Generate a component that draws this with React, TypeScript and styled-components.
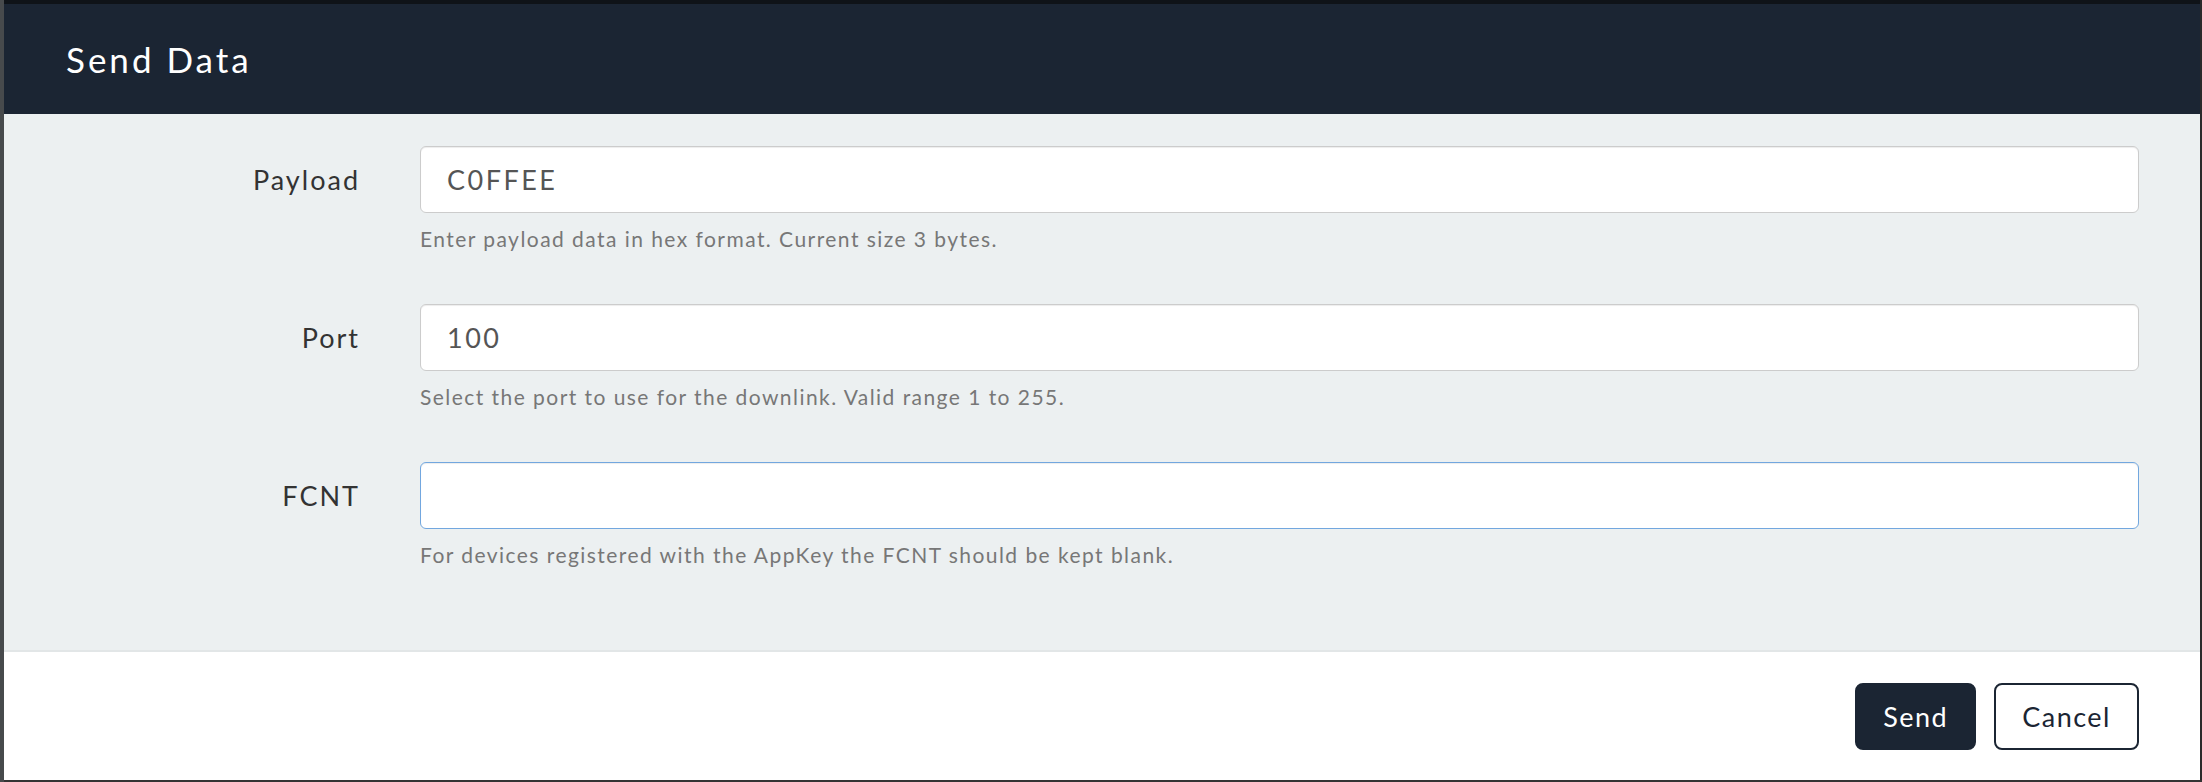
import styled, { createGlobalStyle } from "styled-components";

const GlobalStyle = createGlobalStyle`
    html, body {
        margin: 0;
        padding: 0;
        background: #2f3133;
    }
    * {
        box-sizing: border-box;
    }
`;

const Backdrop = styled.div`
    height: 782px;
    padding: 4px 2px 2px 4px;
    background: #0f1318;
    box-shadow: inset 4px 0 0 #474a4c, inset 0 -2px 0 #343434, inset -2px 0 0 #2a2a2a;
    font-family: "Lato", "Liberation Sans", sans-serif;
`;

const Modal = styled.div`
    height: 100%;
    display: flex;
    flex-direction: column;
    background: #ecf0f1;
`;

const Header = styled.div`
    height: 110px;
    flex-shrink: 0;
    display: flex;
    align-items: center;
    padding-left: 62px;
    background: #1b2533;
`;

const Title = styled.h4`
    margin: 0;
    font-size: 35px;
    font-weight: 400;
    letter-spacing: 3px;
    color: #ffffff;
`;

const Body = styled.div`
    flex: 1;
    display: flex;
    flex-direction: column;
    gap: 52px;
    padding: 32px 61px 0 0;
    border-bottom: 2px solid #e2e6e7;
`;

const FormRow = styled.div`
    display: grid;
    grid-template-columns: 356px 1fr;
    column-gap: 60px;
`;

const Label = styled.label`
    height: 67px;
    display: flex;
    align-items: center;
    justify-content: flex-end;
    font-size: 27px;
    letter-spacing: 2px;
    color: #333333;
`;

const Field = styled.div`
    display: flex;
    flex-direction: column;
    gap: 13px;
`;

const Input = styled.input<{ $focused?: boolean }>`
    height: 67px;
    width: 100%;
    padding: 0 26px;
    border: 1px solid ${(props) => props.$focused ? "#72a7df" : "#cccccc"};
    border-radius: 6px;
    box-shadow: inset 0 1px 1px rgba(0, 0, 0, 0.075);
    background: #ffffff;
    font-family: inherit;
    font-size: 27px;
    letter-spacing: 2.5px;
    color: #555555;
    outline: none;
`;

const Help = styled.span`
    line-height: 26px;
    font-size: 21px;
    letter-spacing: 1.45px;
    color: #777777;
`;

const Footer = styled.div`
    height: 128px;
    flex-shrink: 0;
    display: flex;
    justify-content: flex-end;
    align-items: center;
    gap: 18px;
    padding-right: 61px;
    background: #ffffff;
`;

const Button = styled.button<{ $primary?: boolean }>`
    height: 67px;
    padding: 0 26px;
    border: 2px solid #1b2533;
    border-radius: 8px;
    background: ${(props) => props.$primary ? "#1b2533" : "#ffffff"};
    color: ${(props) => props.$primary ? "#ffffff" : "#1b2533"};
    font-family: inherit;
    font-size: 27px;
    letter-spacing: 1.5px;
    cursor: pointer;
`;

export default function App() {
    return (
        <>
            <GlobalStyle />
            <Backdrop>
                <Modal>
                    <Header>
                        <Title>Send Data</Title>
                    </Header>
                    <Body>
                        <FormRow>
                            <Label>Payload</Label>
                            <Field>
                                <Input defaultValue="C0FFEE" />
                                <Help>Enter payload data in hex format. Current size 3 bytes.</Help>
                            </Field>
                        </FormRow>
                        <FormRow>
                            <Label>Port</Label>
                            <Field>
                                <Input defaultValue="100" />
                                <Help>Select the port to use for the downlink. Valid range 1 to 255.</Help>
                            </Field>
                        </FormRow>
                        <FormRow>
                            <Label>FCNT</Label>
                            <Field>
                                {/* focused field in the screenshot */}
                                <Input $focused defaultValue="" />
                                <Help>For devices registered with the AppKey the FCNT should be kept blank.</Help>
                            </Field>
                        </FormRow>
                    </Body>
                    <Footer>
                        <Button $primary>Send</Button>
                        <Button>Cancel</Button>
                    </Footer>
                </Modal>
            </Backdrop>
        </>
    );
}
